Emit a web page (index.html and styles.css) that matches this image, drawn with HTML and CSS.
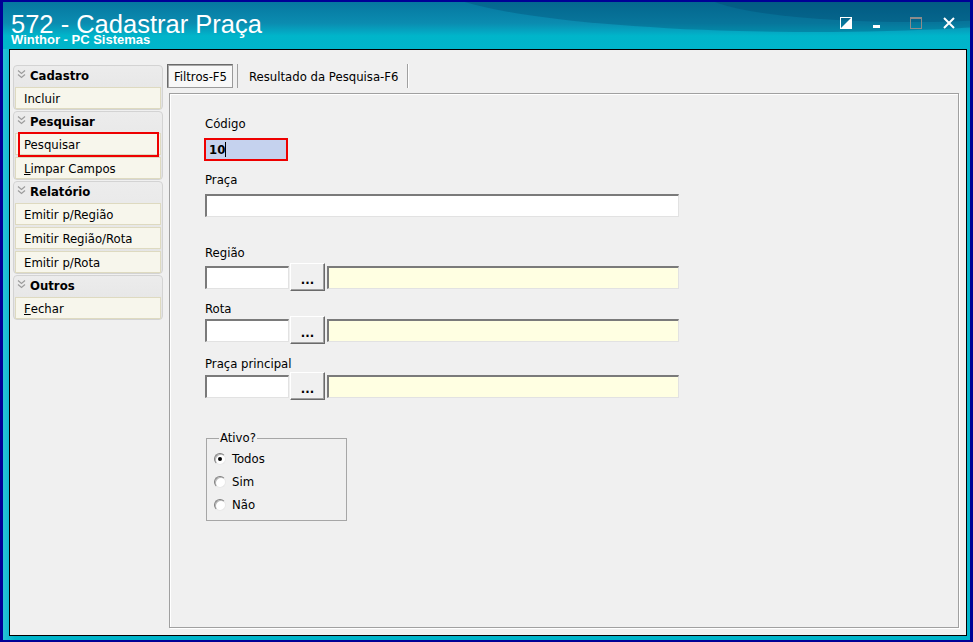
FILE: index.html
```html
<!DOCTYPE html>
<html lang="pt-BR">
<head>
  <meta charset="UTF-8">
  <title>572 - Cadastrar Praça</title>
  <link rel="stylesheet" href="styles.css">
</head>
<body>
  <div class="window">
    <div class="titlebar">
      <div class="title-text">
        <h1>572 - Cadastrar Praça</h1>
        <div class="subtitle">Winthor - PC Sistemas</div>
      </div>
      <div class="win-buttons">
        <svg class="wbtn" width="12" height="12" viewBox="0 0 12 12">
          <rect x="0.5" y="0.5" width="11" height="11" fill="none" stroke="#fff"/>
          <polygon points="0,12 12,0 12,12" fill="#fff"/>
        </svg>
        <svg class="wbtn wbtn-min" width="12" height="12" viewBox="0 0 12 12">
          <rect x="3" y="8" width="7" height="3" fill="#fff"/>
        </svg>
        <svg class="wbtn wbtn-max" width="12" height="12" viewBox="0 0 12 12">
          <rect x="0.5" y="0.5" width="11" height="11" fill="none" stroke="#8c8c8c"/>
          <rect x="0" y="0" width="12" height="2" fill="#8c8c8c"/>
        </svg>
        <svg class="wbtn wbtn-close" width="12" height="12" viewBox="0 0 12 12">
          <path d="M1 1 L11 11 M11 1 L1 11" stroke="#fff" stroke-width="2"/>
        </svg>
      </div>
    </div>

    <div class="client">
      <aside class="sidebar">
        <div class="group">
          <div class="group-head">
            <svg class="chev" width="9" height="9" viewBox="0 0 9 9"><path d="M1 0.5 L4.5 3.5 L8 0.5 M1 4.5 L4.5 7.5 L8 4.5" fill="none" stroke="#9c9c9c" stroke-width="1.2"/></svg>
            Cadastro
          </div>
          <div class="item">Incluir</div>
        </div>
        <div class="group">
          <div class="group-head">
            <svg class="chev" width="9" height="9" viewBox="0 0 9 9"><path d="M1 0.5 L4.5 3.5 L8 0.5 M1 4.5 L4.5 7.5 L8 4.5" fill="none" stroke="#9c9c9c" stroke-width="1.2"/></svg>
            Pesquisar
          </div>
          <div class="item marked">Pesquisar</div>
          <div class="item"><u>L</u>impar Campos</div>
        </div>
        <div class="group">
          <div class="group-head">
            <svg class="chev" width="9" height="9" viewBox="0 0 9 9"><path d="M1 0.5 L4.5 3.5 L8 0.5 M1 4.5 L4.5 7.5 L8 4.5" fill="none" stroke="#9c9c9c" stroke-width="1.2"/></svg>
            Relatório
          </div>
          <div class="item">Emitir p/Região</div>
          <div class="item">Emitir Região/Rota</div>
          <div class="item">Emitir p/Rota</div>
        </div>
        <div class="group">
          <div class="group-head">
            <svg class="chev" width="9" height="9" viewBox="0 0 9 9"><path d="M1 0.5 L4.5 3.5 L8 0.5 M1 4.5 L4.5 7.5 L8 4.5" fill="none" stroke="#9c9c9c" stroke-width="1.2"/></svg>
            Outros
          </div>
          <div class="item"><u>F</u>echar</div>
        </div>
      </aside>

      <main class="main">
        <div class="tabs">
          <div class="tab active">Filtros-F5</div>
          <div class="tab">Resultado da Pesquisa-F6</div>
        </div>

        <div class="panel">
          <div class="lbl">Código</div>
          <div class="inp inp-codigo"><b>10</b><span class="caret"></span></div>

          <div class="lbl lbl-praca">Praça</div>
          <div class="inp inp-wide"></div>

          <div class="lbl lbl-regiao">Região</div>
          <div class="row">
            <div class="inp inp-short"></div>
            <div class="btn-dots">...</div>
            <div class="inp inp-desc"></div>
          </div>

          <div class="lbl lbl-rota">Rota</div>
          <div class="row row-rota">
            <div class="inp inp-short"></div>
            <div class="btn-dots">...</div>
            <div class="inp inp-desc"></div>
          </div>

          <div class="lbl lbl-principal">Praça principal</div>
          <div class="row row-principal">
            <div class="inp inp-short"></div>
            <div class="btn-dots">...</div>
            <div class="inp inp-desc"></div>
          </div>

          <fieldset class="ativo">
            <legend>Ativo?</legend>
            <div class="radio-row"><span class="radio checked"></span>Todos</div>
            <div class="radio-row"><span class="radio"></span>Sim</div>
            <div class="radio-row"><span class="radio"></span>Não</div>
          </fieldset>
        </div>
      </main>
    </div>
  </div>
</body>
</html>
```

FILE: styles.css
```css
body {
  margin: 0;
  background: #000090;
  font-family: "DejaVu Sans Condensed", "DejaVu Sans", sans-serif;
  font-stretch: condensed;
  font-size: 13px;
  color: #000;
}

.window {
  width: 973px;
  height: 642px;
  box-sizing: border-box;
  border-style: solid;
  border-color: #000096;
  border-width: 2px 3px 2px 3px;
  background: linear-gradient(to right, #27c3d6, #00b4ca 12px);
  display: flex;
  flex-direction: column;
}

.titlebar {
  position: relative;
  overflow: hidden;
  height: 47px;
  box-sizing: border-box;
  padding: 11px 15px 0 8px;
  display: flex;
  background: linear-gradient(to bottom, #0677a0 0%, #0b8cb0 45%, #03abc5 66%, #00b5ca 72%, #00b6cb 100%);
}

.titlebar::before {
  content: "";
  position: absolute;
  left: 430px;
  top: -70px;
  width: 760px;
  height: 100px;
  border-radius: 50%;
  background: rgba(0, 60, 100, 0.28);
}

.titlebar::after {
  content: "";
  position: absolute;
  left: 700px;
  top: -40px;
  width: 420px;
  height: 60px;
  border-radius: 50%;
  background: rgba(0, 50, 90, 0.22);
}

.title-text {
  position: relative;
  z-index: 1;
  color: #fff;
  font-family: "Liberation Sans", Arial, sans-serif;
  font-stretch: normal;
}

.title-text h1 {
  margin: 0;
  font-weight: normal;
  font-size: 25.5px;
  line-height: 22px;
}

.subtitle {
  font-weight: bold;
  font-size: 13px;
  line-height: 10px;
}

.win-buttons {
  position: relative;
  z-index: 1;
  margin-left: auto;
  margin-top: 4px;
  display: flex;
  align-items: flex-start;
}

.wbtn-min {
  margin-left: 18px;
}

.wbtn-max {
  margin-left: 28px;
}

.wbtn-close {
  margin-left: 21px;
}

.client {
  flex: 1;
  margin: 0 3px 4px 6px;
  border: 1px solid #000;
  background: #f0f0f0;
  display: flex;
}

.sidebar {
  width: 157px;
  box-sizing: border-box;
  padding: 15px 0 0 3px;
}

.group {
  width: 150px;
  box-sizing: border-box;
  border: 1px solid #d3d3d3;
  border-radius: 4px;
  background: linear-gradient(to bottom, #ececec, #e3e3e3);
  padding: 0 1px;
  margin-bottom: 1px;
}

.group-head {
  height: 19px;
  display: flex;
  align-items: center;
  font-weight: bold;
}

.chev {
  margin: 0 4px 3px 2px;
}

.item {
  position: relative;
  height: 22px;
  box-sizing: border-box;
  margin-top: 2px;
  border: 1px solid #dedac0;
  background: #f7f6ec;
  padding-left: 8px;
  display: flex;
  align-items: center;
}

.item.marked::after {
  content: "";
  position: absolute;
  left: 2px;
  right: 1px;
  top: -2px;
  bottom: -3px;
  border: 2px solid #ee0000;
}

.main {
  flex: 1;
  display: flex;
  flex-direction: column;
  padding: 14px 7px 7px 0;
}

.tabs {
  display: flex;
  height: 24px;
  margin-bottom: 5px;
}

.tab {
  display: flex;
  align-items: center;
  box-sizing: border-box;
}

.tab.active {
  width: 66px;
  padding-left: 6px;
  border: 1px solid #9a9a9a;
  border-top-color: #6a6a6a;
  border-left-color: #6a6a6a;
  box-shadow: inset 1px 1px 0 #a8a8a8;
  background: #f8f8f8;
}

.tab:not(.active) {
  margin-left: 4px;
  padding: 0 9px 0 11px;
  border-left: 1px solid #a0a0a0;
  border-right: 1px solid #a0a0a0;
  box-shadow: 1px 0 0 #fff;
}

.panel {
  flex: 1;
  margin-left: 2px;
  border: 1px solid #a0a0a0;
  box-shadow: inset 1px 1px 0 #fff, 1px 1px 0 #fff;
  padding: 22px 0 0 35px;
}

.lbl {
  height: 16px;
  line-height: 16px;
}

.lbl-praca {
  margin-top: 11px;
}

.lbl-regiao {
  margin-top: 28px;
}

.lbl-rota {
  margin-top: 10px;
}

.lbl-principal {
  margin-top: 12px;
}

.inp {
  height: 23px;
  box-sizing: border-box;
  background: #fff;
  border-style: solid;
  border-width: 2px 1px 1px 2px;
  border-color: #7a7a7a #e2e2e2 #e2e2e2 #7a7a7a;
}

.inp-codigo {
  width: 84px;
  margin: 6px 0 0 -1px;
  border: 2px solid #ee0000;
  background: #c5d2ee;
  display: flex;
  align-items: center;
  padding-left: 3px;
}

.caret {
  width: 1px;
  height: 15px;
  background: #000;
}

.inp-wide {
  width: 474px;
  margin-top: 6px;
}

.row {
  display: flex;
  align-items: center;
  height: 28px;
  margin-top: 2px;
}

.row-rota {
  margin-top: -1px;
}

.row-principal {
  margin-top: 0;
}

.inp-short {
  width: 84px;
}

.inp-desc {
  width: 352px;
  margin-left: 2px;
  background: #ffffe2;
}

.btn-dots {
  width: 35px;
  height: 28px;
  box-sizing: border-box;
  margin-left: 1px;
  border: 1px solid;
  border-color: #fff #6a6a6a #6a6a6a #fff;
  box-shadow: inset -1px -1px 0 #a0a0a0;
  background: #f0f0f0;
  display: flex;
  justify-content: center;
  align-items: center;
  padding-top: 5px;
  font-weight: bold;
  line-height: 10px;
}

.ativo {
  width: 141px;
  box-sizing: border-box;
  margin: 31px 0 0 1px;
  padding: 2px 0 4px 7px;
  border: 1px solid #a6a6a6;
}

.ativo legend {
  margin-left: 5px;
  padding: 0 1px;
  line-height: 14px;
}

.radio-row {
  height: 23px;
  display: flex;
  align-items: center;
}

.radio {
  width: 12px;
  height: 12px;
  box-sizing: border-box;
  margin-right: 6px;
  border-radius: 50%;
  border: 1px solid;
  border-color: #7e7e7e #e8e8e8 #e8e8e8 #7e7e7e;
  box-shadow: inset 1px 1px 0 #b8b8b8;
  background: #fff;
  display: flex;
  justify-content: center;
  align-items: center;
}

.radio.checked::after {
  content: "";
  width: 4px;
  height: 4px;
  border-radius: 50%;
  background: #000;
}
```
